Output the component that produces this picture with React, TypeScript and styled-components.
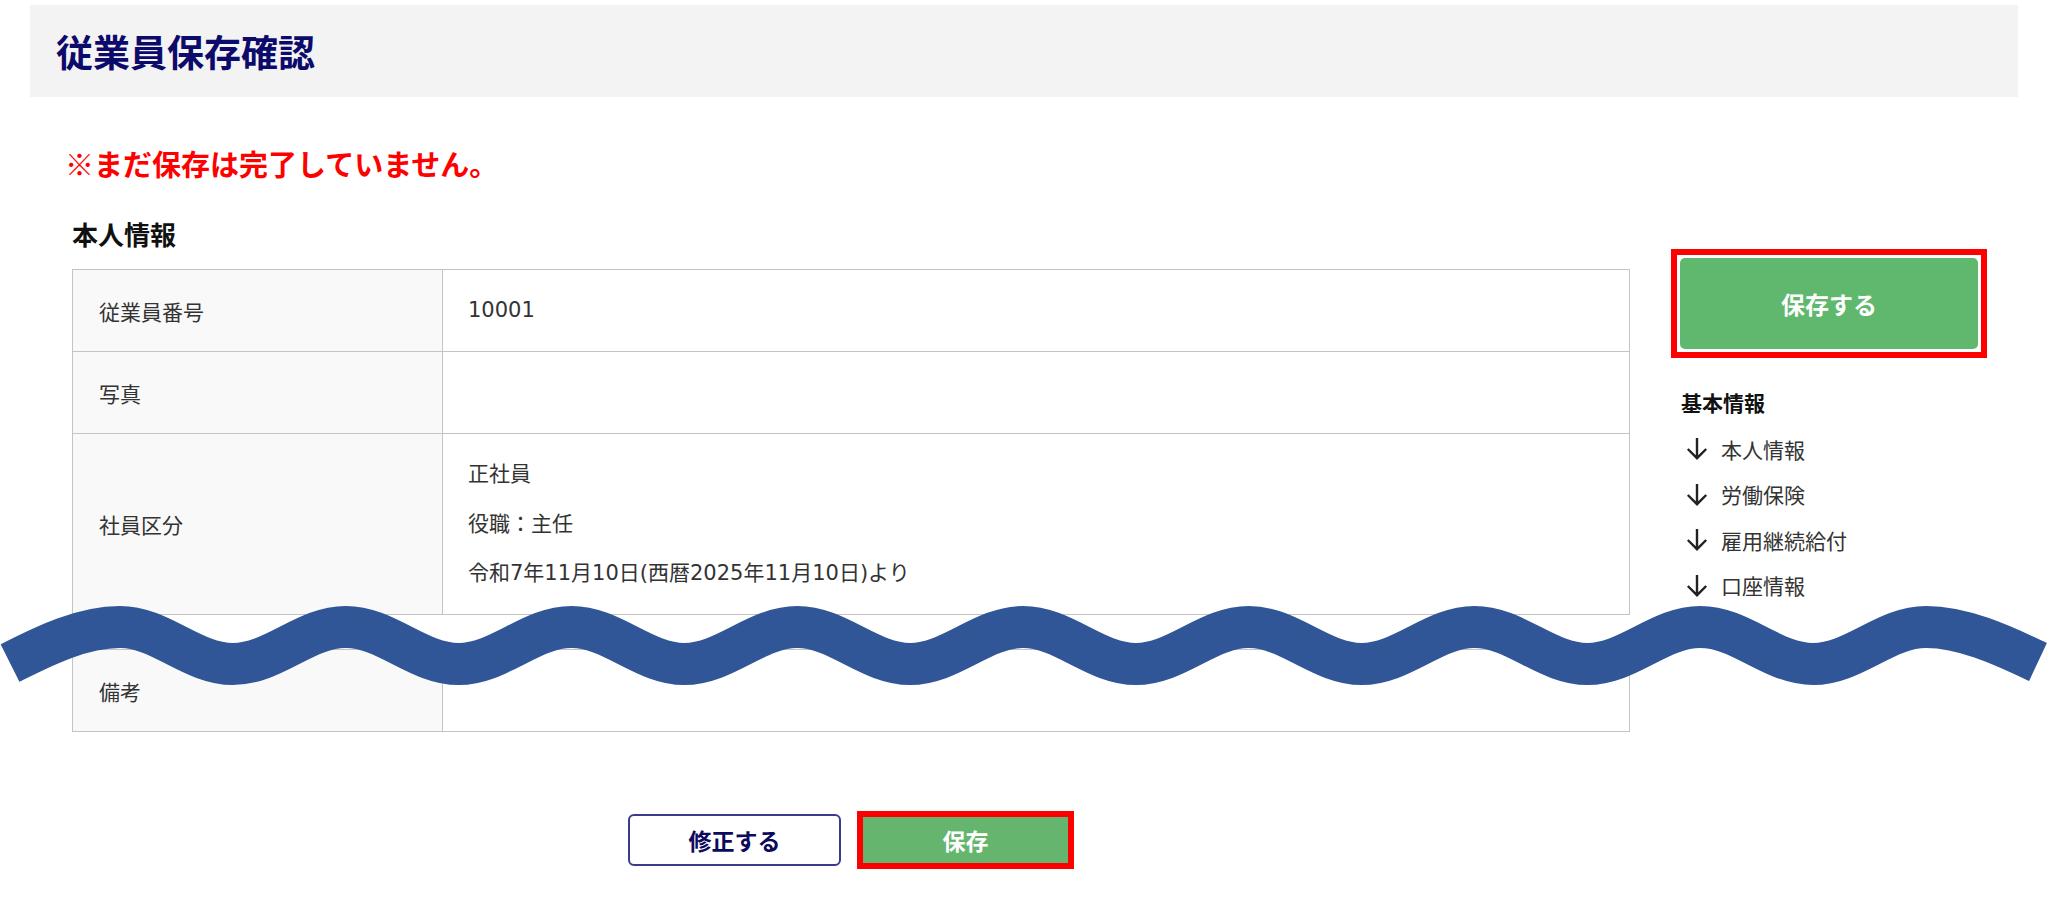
import React from "react";
import styled, { createGlobalStyle } from "styled-components";

const GlobalStyle = createGlobalStyle`
  html, body {
    margin: 0;
    padding: 0;
    background: #fff;
  }
  body {
    font-family: "Noto Sans CJK JP", "Noto Sans", sans-serif;
    color: #333;
  }
`;

const rows = [
  { label: "従業員番号", lines: ["10001"] },
  { label: "写真", lines: [""] },
  {
    label: "社員区分",
    lines: ["正社員", "役職：主任", "令和7年11月10日(西暦2025年11月10日)より"],
  },
];

const navLinks = ["本人情報", "労働保険", "雇用継続給付", "口座情報"];

const WAVE_PERIOD = 225.75;
const WAVE_FIRST_PEAK = 120;
const PEAK_Y = 37;
const TROUGH_Y = 74;

// wave centre line: rising start, sine-like middle, falling end
const buildWave = () => {
  const half = WAVE_PERIOD / 2;
  const lastPeak = WAVE_FIRST_PEAK + WAVE_PERIOD * 8;
  let d = `M 10 73 C 40 58 ${WAVE_FIRST_PEAK - 40} ${PEAK_Y} ${WAVE_FIRST_PEAK} ${PEAK_Y}`;
  let x = WAVE_FIRST_PEAK;
  let atPeak = true;
  while (x < lastPeak - 1) {
    const nx = x + half;
    const y0 = atPeak ? PEAK_Y : TROUGH_Y;
    const y1 = atPeak ? TROUGH_Y : PEAK_Y;
    d += ` C ${x + half * 0.36} ${y0} ${nx - half * 0.36} ${y1} ${nx} ${y1}`;
    x = nx;
    atPeak = !atPeak;
  }
  d += ` C ${lastPeak + 40} ${PEAK_Y} 2008 58 2038 72`;
  return d;
};

const App = () => {
  return (
    <>
      <GlobalStyle />
      <Page>
        <Header>
          <Title>従業員保存確認</Title>
        </Header>

        <Warning>※まだ保存は完了していません。</Warning>

        <Columns>
          <Main>
            <SectionTitle>本人情報</SectionTitle>
            <InfoTable>
              <tbody>
                {rows.map((row) => (
                  <tr key={row.label}>
                    <LabelCell>{row.label}</LabelCell>
                    <ValueCell>
                      {row.lines.map((line, i) => (
                        <Line key={i} $last={i === row.lines.length - 1}>
                          {line}
                        </Line>
                      ))}
                    </ValueCell>
                  </tr>
                ))}
              </tbody>
            </InfoTable>
            <Gap />
            <InfoTable>
              <tbody>
                <tr>
                  <LabelCell>備考</LabelCell>
                  <ValueCell>
                    <Line $last>{""}</Line>
                  </ValueCell>
                </tr>
              </tbody>
            </InfoTable>

            <Actions>
              <EditButton>修正する</EditButton>
              <Highlight $pad={0}>
                <SaveButton>保存</SaveButton>
              </Highlight>
            </Actions>
          </Main>

          <Side>
            <Highlight $pad={3}>
              <SideSaveButton>保存する</SideSaveButton>
            </Highlight>
            <SideTitle>基本情報</SideTitle>
            <NavList>
              {navLinks.map((link) => (
                <NavItem key={link}>
                  <svg width="22" height="23" viewBox="0 0 22 23" fill="none">
                    <path
                      d="M11 1 V21 M1.8 12 L11 21.2 L20.2 12"
                      stroke="#222"
                      strokeWidth="2.4"
                    />
                  </svg>
                  <span>{link}</span>
                </NavItem>
              ))}
            </NavList>
          </Side>
        </Columns>

        <Wave viewBox="0 0 2048 110" preserveAspectRatio="none">
          <path d={buildWave()} stroke="#305697" strokeWidth="42" fill="none" />
        </Wave>
      </Page>
    </>
  );
};

export default App;

const Page = styled.div`
  position: relative;
  width: 2048px;
  min-height: 910px;
  box-sizing: border-box;
  padding: 5px 30px 0 30px;
`;

const Header = styled.div`
  height: 92px;
  background: #f3f3f3;
  display: flex;
  align-items: center;
  padding-left: 26px;
`;

const Title = styled.h1`
  margin: 0;
  font-size: 37px;
  line-height: 44px;
  font-weight: 700;
  color: #0c0a6b;
`;

const Warning = styled.p`
  margin: 46px 0 0 35px;
  font-size: 29px;
  line-height: 40px;
  font-weight: 700;
  color: #ff0000;
`;

const Columns = styled.div`
  display: flex;
  gap: 41px;
  padding-left: 42px;
  margin-top: 33px;
`;

const Main = styled.div`
  width: 1558px;
  display: flex;
  flex-direction: column;
`;

const SectionTitle = styled.h2`
  margin: 0 0 17px 0;
  font-size: 26px;
  line-height: 36px;
  font-weight: 700;
  color: #111;
`;

const InfoTable = styled.table`
  width: 100%;
  border-collapse: collapse;
  border: 1px solid #c4c4c4;
  font-family: "DejaVu Sans", "Noto Sans CJK JP", sans-serif;
  font-size: 21px;
  color: #333;
`;

const LabelCell = styled.th`
  width: 370px;
  box-sizing: border-box;
  background: #f9f9f9;
  border: 1px solid #c4c4c4;
  padding: 0 0 0 26px;
  text-align: left;
  font-weight: 400;
  vertical-align: middle;
`;

const ValueCell = styled.td`
  border: 1px solid #c4c4c4;
  padding: 25px 25px 26px 25px;
`;

const Line = styled.div<{ $last?: boolean }>`
  height: 30px;
  line-height: 30px;
  margin-bottom: ${(p) => (p.$last ? 0 : "19.5px")};
`;

const Gap = styled.div`
  height: 34px;
`;

const Actions = styled.div`
  display: flex;
  justify-content: center;
  align-items: center;
  gap: 16px;
  margin-top: 79px;
`;

const Highlight = styled.div<{ $pad: number }>`
  border: 6px solid #ff0000;
  padding: ${(p) => p.$pad}px;
  background: #fff;
  display: flex;
`;

const EditButton = styled.button`
  width: 213px;
  height: 52px;
  background: #fff;
  border: 2px solid #3b3a8c;
  border-radius: 6px;
  font-family: inherit;
  font-size: 23px;
  font-weight: 700;
  color: #0c0a5c;
  cursor: pointer;
`;

const SaveButton = styled.button`
  width: 205px;
  height: 46px;
  background: #65b56e;
  border: none;
  font-family: inherit;
  font-size: 23px;
  font-weight: 700;
  color: #fff;
  cursor: pointer;
`;

const Side = styled.aside`
  width: 316px;
  margin-top: 33px;
  display: flex;
  flex-direction: column;
`;

const SideSaveButton = styled.button`
  width: 298px;
  height: 91px;
  background: #5fb86d;
  border: none;
  border-radius: 5px;
  font-family: inherit;
  font-size: 24px;
  font-weight: 700;
  color: #fff;
  cursor: pointer;
`;

const SideTitle = styled.h3`
  margin: 29px 0 0 10px;
  font-size: 21px;
  line-height: 30px;
  font-weight: 700;
  color: #111;
`;

const NavList = styled.ul`
  list-style: none;
  margin: 9px 0 0 0;
  padding: 0 0 0 15px;
  display: flex;
  flex-direction: column;
`;

const NavItem = styled.li`
  display: flex;
  align-items: center;
  gap: 13px;
  height: 45.5px;
  font-size: 21px;
  color: #333;
  svg {
    flex: none;
  }
`;

const Wave = styled.svg`
  position: absolute;
  left: 0;
  top: 590px;
  width: 2048px;
  height: 110px;
  pointer-events: none;
`;
